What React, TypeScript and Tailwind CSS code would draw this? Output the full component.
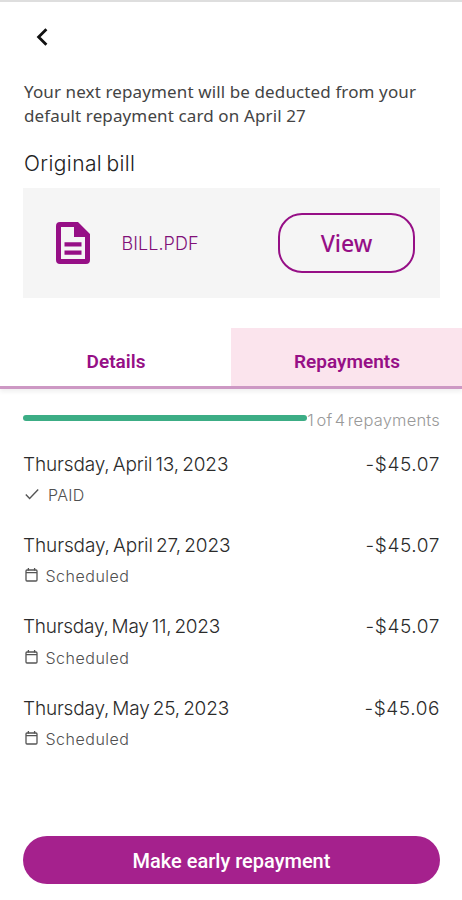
import * as React from 'react';

interface Repayment {
  date: string;
  amount: string;
  status: 'paid' | 'scheduled';
  dateClass: string;
}

const repayments: Repayment[] = [
  { date: 'Thursday, April 13, 2023', amount: '-$45.07', status: 'paid', dateClass: 'tracking-[-0.13px] [word-spacing:-2px]' },
  { date: 'Thursday, April 27, 2023', amount: '-$45.07', status: 'scheduled', dateClass: 'tracking-[-0.1px] [word-spacing:-2px]' },
  { date: 'Thursday, May 11, 2023', amount: '-$45.07', status: 'scheduled', dateClass: 'tracking-[-0.25px] [word-spacing:-2px]' },
  { date: 'Thursday, May 25, 2023', amount: '-$45.06', status: 'scheduled', dateClass: 'tracking-[-0.18px] [word-spacing:-2px]' },
];

const BackIcon = () => (
  <svg className="h-[18px] w-[12px]" viewBox="0 0 12 18" fill="none" stroke="#111111" strokeWidth="2.8">
    <path d="M10.4 1.2 2.6 9l7.8 7.8" />
  </svg>
);

const DocumentIcon = () => (
  <svg className="h-[42px] w-[34px]" viewBox="0 0 34 42">
    <path
      fill="#960f86"
      fillRule="evenodd"
      d="M4 0h18l12 12v26a4 4 0 0 1-4 4H4a4 4 0 0 1-4-4V4a4 4 0 0 1 4-4Zm1 5v32h24V15H18V5H5Z"
    />
    <path fill="#960f86" d="M8.5 20.2h17v4.3h-17zM8.5 28.5h17v4.3h-17z" />
  </svg>
);

const CheckIcon = () => (
  <svg className="h-[12px] w-[14px]" viewBox="0 0 14 12" fill="none" stroke="#555555" strokeWidth="1.4">
    <path d="m.8 6.6 3.8 3.8L13.2 1.6" />
  </svg>
);

const CalendarIcon = () => (
  <svg className="h-[14px] w-[13px]" viewBox="0 0 13 14" fill="none" stroke="#555555" strokeWidth="1.3">
    <rect x="1" y="2" width="11" height="11" rx="1" />
    <path d="M1 4.6h11M3.4 0v2.4M9.6 0v2.4" />
  </svg>
);

const RepaymentRow: React.FC<{ item: Repayment }> = ({ item }) => {
  const paid = item.status === 'paid';
  return (
    <li className="h-[81.3px]">
      <div className="flex h-7 items-center justify-between whitespace-nowrap text-[19px] font-light text-[#2b2b2b]">
        <span className={item.dateClass}>{item.date}</span>
        <span className="tracking-[0.6px]">{item.amount}</span>
      </div>
      <div className="mt-[4px] flex h-6 items-center text-[16px] font-light text-[#505050]">
        {paid ? (
          <>
            <span className="ml-[2px] w-[23px] -translate-y-px"><CheckIcon /></span>
            <span className="tracking-[0.3px]">PAID</span>
          </>
        ) : (
          <>
            <span className="ml-[2px] w-[20.5px] -translate-y-px"><CalendarIcon /></span>
            <span className="tracking-[0.5px]">Scheduled</span>
          </>
        )}
      </div>
    </li>
  );
};

const App = () => {
  return (
    <main className="flex h-[900px] w-[462px] flex-col border-t-2 border-[#dedede] bg-white font-['Inter',sans-serif]">
      <header className="pl-[36px] pt-[26px]">
        <button className="block" aria-label="Back"><BackIcon /></button>
      </header>

      <section className="mt-[34px] px-6">
        <p className="whitespace-nowrap font-['Noto_Sans',sans-serif] text-[17px] leading-[24px] tracking-[0.12px] text-[#444444]">
          Your next repayment will be deducted from your
          <br />
          default repayment card on April 27
        </p>
        <h2 className="mt-[21px] flex h-[30px] items-center whitespace-nowrap text-[21px] font-light tracking-[0.4px] text-[#222222] [word-spacing:-2px]">
          Original bill
        </h2>
      </section>

      <div className="ml-[23px] mt-[9px] flex h-[110px] w-[417px] items-center bg-[#f5f5f5] pl-[33px] pr-[25px]">
        <DocumentIcon />
        <span className="ml-[31.5px] text-[18px] font-light tracking-[0.05px] text-[#811078]">BILL.PDF</span>
        <button className="ml-auto h-[60px] w-[137px] rounded-[24px] border-2 border-[#960f86] pt-px font-['Noto_Sans',sans-serif] text-[23px] font-medium text-[#960f86]">
          View
        </button>
      </div>

      <nav className="mt-[30px] flex h-[61px] shrink-0 border-b-[3px] border-[#cd98c4] font-['Roboto',sans-serif] text-[19px] font-semibold text-[#960f86] shadow-[0_3px_4px_rgba(0,0,0,0.06)]">
        <button className="w-[231px] pl-px pt-[10px]">Details</button>
        <button className="w-[231px] bg-[#fbe4ed] pl-px pt-[10px]">Repayments</button>
      </nav>

      <div className="ml-[23px] mr-[22px] mt-[16px] flex h-[26px] items-center">
        <div className="h-[6px] w-[284px] shrink-0 rounded-full bg-[#3cad85]" />
        <span className="ml-auto whitespace-nowrap pt-[4px] text-[16.5px] font-light tracking-[0.2px] text-[#999999] [word-spacing:-2.4px]">
          1 of 4 repayments
        </span>
      </div>

      <ul className="ml-[23px] mr-[22px] mt-[20px]">
        {repayments.map((item) => (
          <RepaymentRow key={item.date} item={item} />
        ))}
      </ul>

      <button className="ml-[23px] mr-[22px] mb-[16px] mt-auto h-[48px] shrink-0 rounded-full bg-[#a5218d] pt-px font-['Roboto',sans-serif] text-[20px] font-medium text-white">
        Make early repayment
      </button>
    </main>
  );
};

export default App;
